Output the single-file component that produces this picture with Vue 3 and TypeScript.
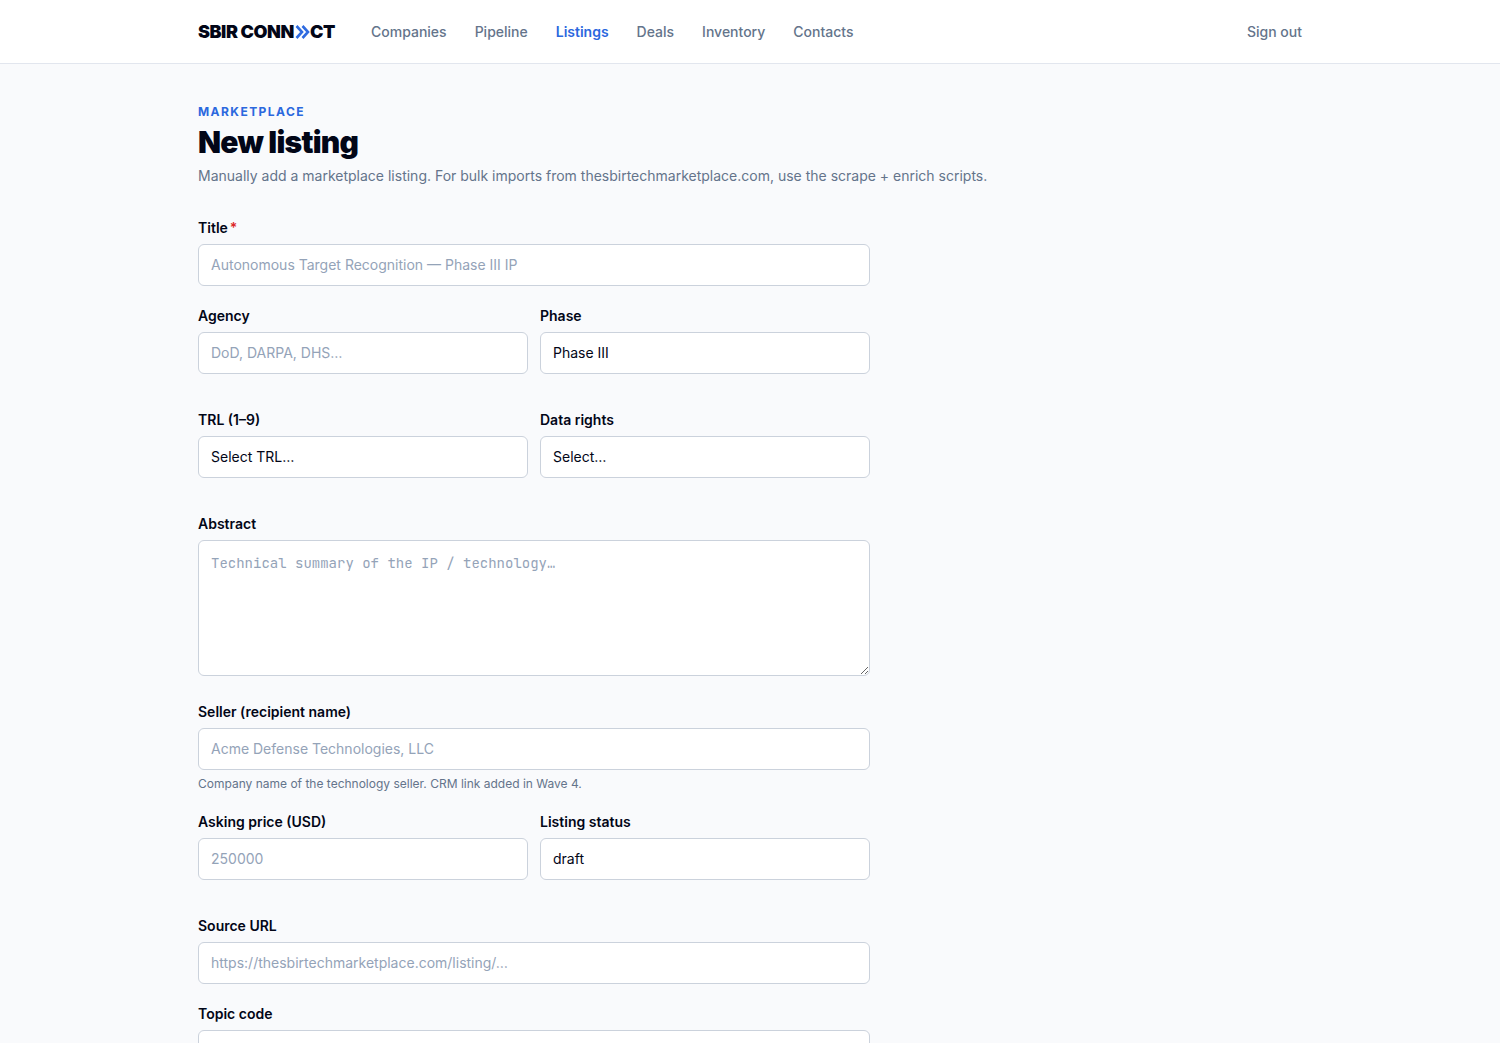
<script setup lang="ts">
import { ref } from 'vue'

interface NavItem {
  label: string
  active?: boolean
}

const nav: NavItem[] = [
  { label: 'Companies' },
  { label: 'Pipeline' },
  { label: 'Listings', active: true },
  { label: 'Deals' },
  { label: 'Inventory' },
  { label: 'Contacts' },
]

const phase = ref<string>('Phase III')
const trl = ref<string>('')
const rights = ref<string>('')
const status = ref<string>('draft')
</script>

<template>
  <div class="page">
    <header class="topbar">
      <div class="container bar">
        <a class="logo"><span>SBIR CONN</span><svg class="chevrons" viewBox="0 0 15 14" fill="none" stroke="currentColor" stroke-width="2.6"><path d="M1.5 1 7 7l-5.5 6M7.5 1 13 7l-5.5 6" /></svg><span>CT</span></a>
        <nav class="nav">
          <a v-for="item in nav" :key="item.label" :class="{ active: item.active }">{{ item.label }}</a>
        </nav>
        <a class="signout">Sign out</a>
      </div>
    </header>

    <main class="container main">
      <div class="eyebrow">MARKETPLACE</div>
      <h1>New listing</h1>
      <p class="lead">Manually add a marketplace listing. For bulk imports from thesbirtechmarketplace.com, use the scrape + enrich scripts.</p>

      <form class="form">
        <div class="field">
          <label>Title<span class="req">*</span></label>
          <input type="text" placeholder="Autonomous Target Recognition — Phase III IP" />
        </div>
        <div class="row">
          <div class="field">
            <label>Agency</label>
            <input type="text" placeholder="DoD, DARPA, DHS…" />
          </div>
          <div class="field">
            <label>Phase</label>
            <select v-model="phase"><option>Phase III</option></select>
          </div>
        </div>
        <div class="row">
          <div class="field">
            <label>TRL (1–9)</label>
            <select v-model="trl"><option value="">Select TRL…</option></select>
          </div>
          <div class="field">
            <label>Data rights</label>
            <select v-model="rights"><option value="">Select…</option></select>
          </div>
        </div>
        <div class="field abstract">
          <label>Abstract</label>
          <textarea placeholder="Technical summary of the IP / technology…"></textarea>
        </div>
        <div class="field">
          <label>Seller (recipient name)</label>
          <input type="text" placeholder="Acme Defense Technologies, LLC" />
          <p class="help">Company name of the technology seller. CRM link added in Wave 4.</p>
        </div>
        <div class="row">
          <div class="field">
            <label>Asking price (USD)</label>
            <input type="text" placeholder="250000" />
          </div>
          <div class="field">
            <label>Listing status</label>
            <select v-model="status"><option>draft</option></select>
          </div>
        </div>
        <div class="field">
          <label>Source URL</label>
          <input type="text" placeholder="https://thesbirtechmarketplace.com/listing/…" />
        </div>
        <div class="field">
          <label>Topic code</label>
          <input type="text" />
        </div>
      </form>
    </main>
  </div>
</template>

<style>
body {
  margin: 0;
  background: #f9fafc;
}
</style>

<style scoped>
.page {
  height: 100vh;
  overflow: hidden;
  background: #f9fafc;
  color: #020617;
  font-family: Inter, sans-serif;
  font-size: 14px;
  line-height: 20px;
  -webkit-font-smoothing: antialiased;
}
.page * {
  box-sizing: border-box;
}
.container {
  max-width: 1152px;
  margin: 0 auto;
  padding: 0 24px;
}
.topbar {
  height: 64px;
  background: #fff;
  border-bottom: 1px solid #e2e6ee;
}
.bar {
  height: 63px;
  display: flex;
  align-items: center;
}
.logo {
  display: flex;
  align-items: center;
  width: 137px;
  font-size: 18px;
  font-weight: 900;
  letter-spacing: -0.45px;
  white-space: nowrap;
}
.chevrons {
  width: 15px;
  height: 14px;
  flex: none;
  margin: 0 0 0 1px;
  color: #2f6be0;
}
.nav {
  display: flex;
  gap: 28px;
  margin-left: 36px;
}
.nav a,
.signout {
  color: #64748b;
  font-weight: 500;
}
.nav a.active {
  color: #2b68de;
  font-weight: 600;
}
.signout {
  margin-left: auto;
}
.main {
  padding-top: 40px;
}
.eyebrow {
  line-height: 16px;
  font-size: 12px;
  font-weight: 700;
  letter-spacing: 1.44px;
  color: #2b68de;
}
h1 {
  margin: 4px 0 0;
  font-size: 30px;
  line-height: 36px;
  font-weight: 900;
  letter-spacing: -0.75px;
}
.lead {
  margin: 6px 0 0;
  color: #64748b;
}
.form {
  width: 672px;
  margin-top: 32px;
}
.field {
  margin-bottom: 20px;
}
.row {
  display: grid;
  grid-template-columns: 1fr 1fr;
  gap: 12px;
  margin-bottom: 16px;
}
label {
  display: block;
  margin-bottom: 6px;
  font-weight: 600;
}
.req {
  margin-left: 2px;
  color: #dc2626;
}
input,
select,
textarea {
  display: block;
  width: 100%;
  height: 42px;
  margin: 0;
  padding: 0 12px;
  border: 1px solid #cbd2dc;
  border-radius: 6px;
  background: #fff;
  color: #020617;
  font: inherit;
  outline: none;
  appearance: none;
}
input {
  padding-bottom: 1px;
}
textarea {
  height: 136px;
  padding: 12px;
  font-family: 'JetBrains Mono', 'DejaVu Sans Mono', monospace;
  resize: vertical;
}
::placeholder {
  color: #94a3b8;
  opacity: 1;
}
.abstract {
  margin-bottom: 26px;
}
.help {
  margin: 6px 0 0;
  font-size: 12px;
  line-height: 16px;
  color: #64748b;
}
</style>
